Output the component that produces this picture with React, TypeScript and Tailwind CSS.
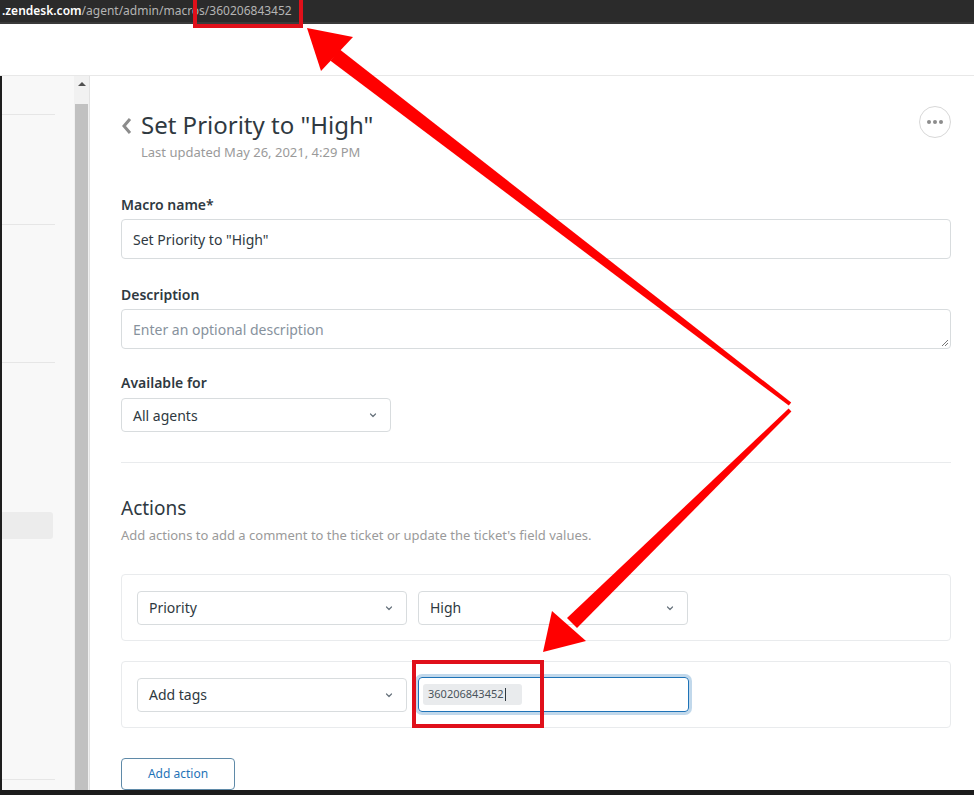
import React from "react";

const Chevron = () => (
  <svg width="10" height="10" viewBox="0 0 10 10" className="text-[#68737d]">
    <path d="M2.5 4 L5 6.5 L7.5 4" fill="none" stroke="currentColor" strokeWidth="1.2" strokeLinecap="round" strokeLinejoin="round" />
  </svg>
);

function Select({ label, className }: { label: string; className: string }) {
  return (
    <div className={"flex items-center justify-between rounded-[4px] border border-[#d8dcde] bg-white pl-[11px] pr-[12px] text-[14px] text-[#2f3941] " + className}>
      <span>{label}</span>
      <Chevron />
    </div>
  );
}

export default function App() {
  return (
    <div className="relative flex h-[795px] w-[974px] flex-col overflow-hidden bg-white" style={{ fontFamily: '"Noto Sans", "Open Sans", sans-serif' }}>
      {/* browser url bar */}
      <div className="flex h-[24px] items-center border-b-[2px] border-[#3a3a3a] bg-[#2b2b2b] pl-[2px] text-[12px] leading-none">
        <span className="font-semibold text-white">.zendesk.com</span>
        <span className="text-[#b4b4b4]">/agent/admin/macros/360206843452</span>
      </div>
      {/* header */}
      <div className="h-[52px] border-b border-[#e8e8e8] bg-white" />
      {/* body */}
      <div className="flex min-h-0 flex-1">
        {/* sidebar */}
        <div className="flex w-[74px] flex-col border-l-[2px] border-[#1e1e1e] bg-[#f8f8f8]">
          <div className="mt-[38px] h-px w-[53px] bg-[#e6e6e6]" />
          <div className="mt-[109px] h-px w-[53px] bg-[#e6e6e6]" />
          <div className="mt-[137px] h-px w-[53px] bg-[#e6e6e6]" />
          <div className="mt-[149px] h-[27px] w-[51px] rounded-r-[3px] bg-[#ececec]" />
          <div className="mt-[240px] h-px w-[53px] bg-[#e6e6e6]" />
        </div>
        {/* scrollbar */}
        <div className="flex w-[16px] flex-col items-center border-r border-[#e2e2e2] bg-[#f1f1f1]">
          <div className="mt-[6px] h-0 w-0 border-x-[4px] border-b-[4px] border-x-transparent border-b-[#505050]" />
          <div className="mt-[18px] w-[13px] flex-1 bg-[#c1c1c1]" />
        </div>
        {/* main */}
        <div className="flex-1 pl-[31px] pr-[23px]">
          <div className="mt-[34px] flex items-start justify-between">
            <div>
              <div className="flex items-center">
                <svg width="12" height="18" viewBox="0 0 12 18" className="mr-[8px] mt-[2px]">
                  <path d="M9 2 L3 9 L9 16" fill="none" stroke="#8c8c8c" strokeWidth="3" />
                </svg>
                <span className="text-[24px] leading-[30px] text-[#2f3941]">Set Priority to "High"</span>
              </div>
              <div className="ml-[20px] mt-[3px] text-[13px] leading-[18px] text-[#9a9a9a]">Last updated May 26, 2021, 4:29 PM</div>
            </div>
            <div className="mt-[-4px] flex h-[32px] w-[32px] items-center justify-center gap-[2px] rounded-full border border-[#d8d8d8]">
              <span className="h-[4px] w-[4px] rounded-full bg-[#8c8c8c]" />
              <span className="h-[4px] w-[4px] rounded-full bg-[#8c8c8c]" />
              <span className="h-[4px] w-[4px] rounded-full bg-[#8c8c8c]" />
            </div>
          </div>

          <div className="mt-[34px] text-[14px] font-semibold leading-[20px] text-[#2f3941]">Macro name*</div>
          <div className="mt-[4px] flex h-[40px] items-center rounded-[4px] border border-[#d8dcde] pl-[11px] text-[14px] text-[#2f3941]">Set Priority to "High"</div>

          <div className="mt-[26px] text-[14px] font-semibold leading-[20px] text-[#2f3941]">Description</div>
          <div className="relative mt-[4px] flex h-[40px] items-center rounded-[4px] border border-[#d8dcde] pl-[11px] text-[14px] text-[#87929d]">
            Enter an optional description
            <svg width="8" height="8" viewBox="0 0 8 8" className="absolute bottom-[1px] right-[1px]">
              <path d="M7 1 L1 7 M7 4 L4 7" stroke="#777" strokeWidth="1" />
            </svg>
          </div>

          <div className="mt-[24px] text-[14px] font-semibold leading-[20px] text-[#2f3941]">Available for</div>
          <Select label="All agents" className="mt-[5px] h-[34px] w-[270px]" />

          <div className="mt-[30px] h-px bg-[#e9ebed]" />

          <div className="mt-[32px] text-[19px] leading-[26px] text-[#2f3941]">Actions</div>
          <div className="mt-[4px] text-[13px] leading-[20px] text-[#9a9a9a]">Add actions to add a comment to the ticket or update the ticket's field values.</div>

          <div className="mt-[29px] flex h-[67px] items-center gap-[11px] rounded-[4px] border border-[#e9ebed] px-[15px]">
            <Select label="Priority" className="h-[34px] w-[270px]" />
            <Select label="High" className="h-[34px] w-[270px]" />
          </div>

          <div className="mt-[20px] flex h-[67px] items-center gap-[11px] rounded-[4px] border border-[#e9ebed] px-[15px]">
            <Select label="Add tags" className="h-[34px] w-[270px]" />
            <div className="flex h-[35px] w-[271px] items-center rounded-[4px] border border-[#1f73b7] pl-[4px] shadow-[0_0_0_3px_rgba(31,115,183,0.28)]">
              <div className="flex h-[21px] w-[99px] items-center rounded-[3px] bg-[#e9ebed] pl-[5px] text-[11px] text-[#49545c]">
                360206843452<span className="ml-[1px] h-[13px] w-px bg-[#2f3941]" />
              </div>
            </div>
          </div>

          <div className="mt-[30px] flex h-[32px] w-[114px] items-center justify-center rounded-[4px] border border-[#5f8aa8] text-[12px] text-[#1f73b7]">Add action</div>
        </div>
      </div>
      <div className="h-[5px] bg-[#1c1c1c]" />

      {/* red annotation overlay */}
      <svg className="pointer-events-none absolute left-0 top-0" width="974" height="795" viewBox="0 0 974 795">
        <rect x="195" y="-2" width="106" height="28" fill="none" stroke="#e0101a" strokeWidth="4" />
        <rect x="414" y="662" width="128" height="64" fill="none" stroke="#e0101a" strokeWidth="4" />
        <polygon points="791.2,402.4 788.8,405.6 330.5,60.8 339.5,49.2" fill="#ff0000" />
        <polygon points="307,28 353,37 321,71" fill="#ff0000" />
        <polygon points="791.4,411.4 788.6,408.6 567,617.9 577,628.1" fill="#ff0000" />
        <polygon points="543,652 552,611 586,641" fill="#ff0000" />
      </svg>
    </div>
  );
}
